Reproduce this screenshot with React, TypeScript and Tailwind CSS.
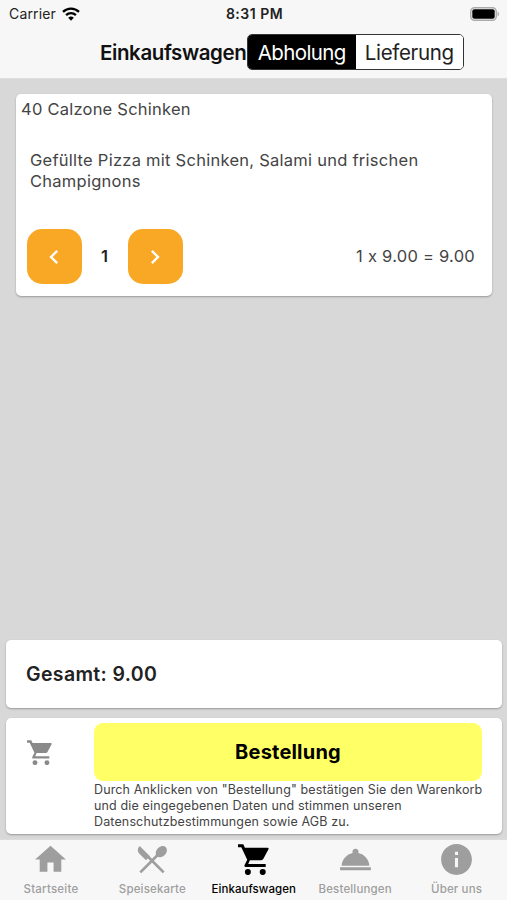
import { useState } from 'react';
import { MdChevronLeft, MdChevronRight, MdHome, MdInfo, MdRoomService } from 'react-icons/md';

const PRICE = 9;

interface IconProps {
  size: number;
}

function CartIcon({ size }: IconProps) {
  return (
    <svg width={size} height={size} viewBox="26 17 94 94" fill="currentColor">
      <path d="M26 18h16l5 10h68q6 0 3 6l-15 28q-2 4-7 4H62l-5 12h53v9H50q-6 0-4-6l8-16-18-38H26z" />
      <circle cx="56" cy="102" r="9.2" />
      <circle cx="101" cy="102" r="9.2" />
    </svg>
  );
}

function CutleryIcon({ size }: IconProps) {
  return (
    <svg width={size} height={size} viewBox="15 10 111 111" fill="currentColor">
      <path d="M32 25 63 56 51 68 31 48Q21 37 32 25z" />
      <ellipse cx="97" cy="42" rx="19" ry="14.5" transform="rotate(-45 97 42)" />
      <path d="M89 49 34 104M58 58l46 46" stroke="currentColor" strokeWidth="8" />
    </svg>
  );
}

const modes = [
  { name: 'Abholung', spacing: 'tracking-[-0.6px]' },
  { name: 'Lieferung', spacing: 'tracking-[-0.35px]' },
];

const tabs = [
  { label: 'Startseite', icon: MdHome, size: 37, spacing: 'tracking-[0.2px]' },
  { label: 'Speisekarte', icon: CutleryIcon, size: 37, spacing: 'tracking-[0.15px]' },
  { label: 'Einkaufswagen', icon: CartIcon, size: 31, spacing: 'tracking-[0.05px]' },
  { label: 'Bestellungen', icon: MdRoomService, size: 37, spacing: 'tracking-[0.15px]' },
  { label: 'Über uns', icon: MdInfo, size: 37, spacing: 'tracking-[0.15px]' },
];

function StatusBar() {
  return (
    <div className="grid h-[27px] grid-cols-3 items-center pr-[7px] pl-[9px] leading-none text-[#222]">
      <div className="flex items-center gap-[6px]">
        <span className="pt-px text-[14px] tracking-[0.15px]">Carrier</span>
        <svg width="18" height="14" viewBox="0 0 18 14" fill="none">
          <path d="M1 4.9a11.3 11.3 0 0 1 16 0" stroke="#000" strokeWidth="2.3" />
          <path d="M4.1 8.1a6.9 6.9 0 0 1 9.8 0" stroke="#000" strokeWidth="2.3" />
          <path d="M9 13.7 6.2 10.8a4 4 0 0 1 5.6 0z" fill="#000" />
        </svg>
      </div>
      <span className="pt-px text-center text-[14px] font-semibold tracking-[0.5px] whitespace-nowrap">8:31 PM</span>
      <svg className="justify-self-end" width="30" height="14" viewBox="0 0 30 14">
        <rect x="0.75" y="0.75" width="25.5" height="12.5" rx="3.8" fill="#f6f6f6" stroke="#aaa" strokeWidth="1.4" />
        <rect x="2.3" y="2.3" width="22.4" height="9.4" rx="2" fill="#000" />
        <path d="M27.6 4.6a2.7 2.7 0 0 1 0 4.8z" fill="#aaa" />
      </svg>
    </div>
  );
}

export default function App() {
  const [mode, setMode] = useState('Abholung');
  const [count, setCount] = useState(1);
  const [activeTab, setActiveTab] = useState('Einkaufswagen');

  const total = (count * PRICE).toFixed(2);

  return (
    <div className="flex h-[900px] w-[507px] flex-col overflow-hidden bg-[#d8d8d8] font-['Inter',sans-serif] text-[#444] [font-feature-settings:'calt'_0]">
      <header className="h-[79px] shrink-0 border-b border-[#dedede] bg-[#f7f7f7]">
        <StatusBar />
        <div className="flex h-[50px] items-center pl-[100px]">
          <h1 className="w-[147px] pt-[2px] text-[20.5px] font-semibold tracking-[-0.4px] whitespace-nowrap text-[#111]">
            Einkaufswagen
          </h1>
          <div className="flex h-9 w-[217px] overflow-hidden rounded-[5px] border border-[#333] bg-white">
            {modes.map(({ name, spacing }) => (
              <button
                key={name}
                onClick={() => setMode(name)}
                className={`flex-1 pt-[2px] text-[20.5px] leading-none ${spacing} ${mode === name ? 'bg-black text-white' : 'bg-white text-[#222]'}`}
              >
                {name}
              </button>
            ))}
          </div>
        </div>
      </header>

      <main className="flex flex-1 flex-col justify-between pt-[15px]">
        <section className="mr-[15px] ml-[15.5px] h-[202px] rounded-[5px] bg-white shadow-[0_1px_2px_rgba(0,0,0,0.3)]">
          <h2 className="pt-[4px] pl-[5.5px] text-[16.5px] leading-[22px] tracking-[0.23px]">40 Calzone Schinken</h2>
          <p className="mt-[30px] pl-[14.5px] text-[16.5px] leading-[21px] tracking-[0.26px]">
            Gefüllte Pizza mit Schinken, Salami und frischen
            <br />
            Champignons
          </p>
          <div className="mt-[37px] flex items-center pr-[17px] pl-[11px]">
            <button
              onClick={() => setCount(Math.max(0, count - 1))}
              className="flex size-[55px] items-center justify-center rounded-[15px] bg-[#f9a825] text-white"
            >
              <MdChevronLeft size={28} />
            </button>
            <span className="w-[46px] text-center text-[16.5px] font-semibold text-[#222]">{count}</span>
            <button
              onClick={() => setCount(count + 1)}
              className="flex size-[55px] items-center justify-center rounded-[15px] bg-[#f9a825] text-white"
            >
              <MdChevronRight size={28} />
            </button>
            <span className="ml-auto text-[16.5px] tracking-[0.25px]">
              {count} x {PRICE.toFixed(2)} = {total}
            </span>
          </div>
        </section>

        <div className="mx-[6px] mb-[5px] flex flex-col gap-[10px]">
          <section className="flex h-[68px] w-[496px] items-center rounded-[5px] bg-white pt-[2px] pl-[20px] shadow-[0_1px_2px_rgba(0,0,0,0.3)]">
            <span className="text-[19.5px] font-semibold tracking-[0.35px] text-[#222]">Gesamt: {total}</span>
          </section>
          <section className="flex h-[116px] w-[496px] rounded-[5px] bg-white pt-[5px] shadow-[0_1px_2px_rgba(0,0,0,0.3)]">
            <div className="w-[88px] shrink-0 pt-[17px] pl-[20.5px] text-[#8a8a8a]">
              <CartIcon size={25} />
            </div>
            <div>
              <button className="block h-[58px] w-[388px] rounded-[9px] bg-[#ffff66] text-[20px] font-bold tracking-[0.2px] text-black">
                Bestellung
              </button>
              <p className="pt-px text-[12.5px] leading-[16px] tracking-[0.14px] whitespace-nowrap">
                Durch Anklicken von "Bestellung" bestätigen Sie den Warenkorb
                <br />
                und die eingegebenen Daten und stimmen unseren
                <br />
                Datenschutzbestimmungen sowie AGB zu.
              </p>
            </div>
          </section>
        </div>
      </main>

      <nav className="grid h-[61px] shrink-0 grid-cols-5 border-t border-[#dcdcdc] bg-[#f7f7f7]">
        {tabs.map(({ label, icon: Icon, size, spacing }) => (
          <button
            key={label}
            onClick={() => setActiveTab(label)}
            className={`flex flex-col items-center pt-[1px] pl-[0.5px] ${activeTab === label ? 'text-black' : 'text-[#9e9e9e]'}`}
          >
            <span className="flex h-[37px] items-center">
              <Icon size={size} />
            </span>
            <span className={`mt-[2px] text-[11.5px] leading-[18px] font-medium ${spacing}`}>{label}</span>
          </button>
        ))}
      </nav>
    </div>
  );
}
